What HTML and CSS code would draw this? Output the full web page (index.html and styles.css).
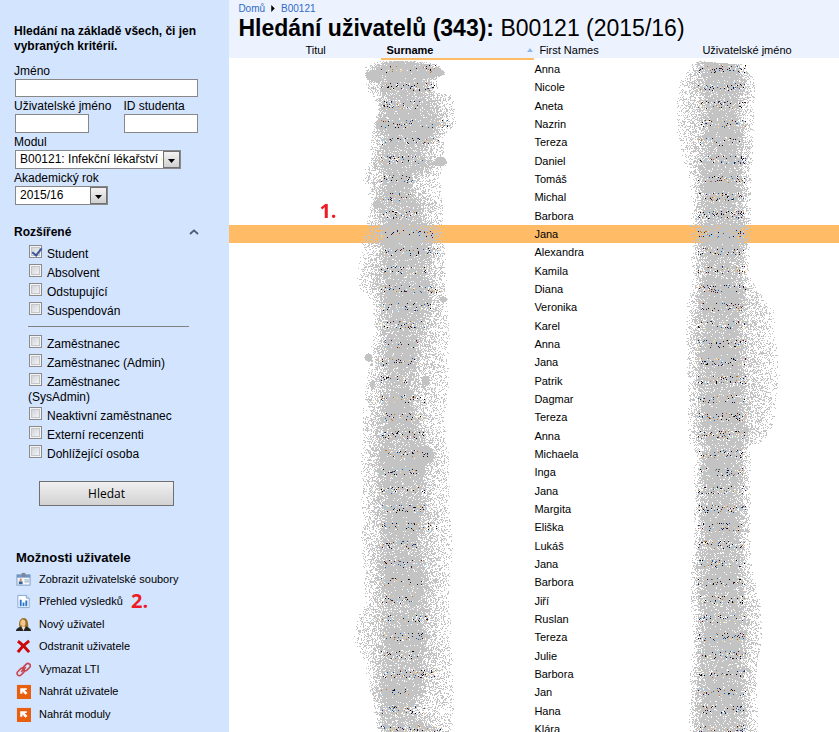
FILE: index.html
```html
<!DOCTYPE html>
<html lang="cs">
<head>
<meta charset="utf-8">
<title>Hledání uživatelů</title>
<link rel="stylesheet" href="styles.css">
</head>
<body>
<div class="app">
  <aside class="sidebar">
    <form class="search">
      <h2 class="intro">Hledání na základě všech, či jen vybraných kritérií.</h2>
      <div class="field"><label for="name">Jméno</label><input class="box" type="text" id="name"></div>
      <div class="pair">
        <div class="field"><label for="user">Uživatelské jméno</label><input class="box short" type="text" id="user"></div>
        <div class="field"><label for="sid">ID studenta</label><input class="box short" type="text" id="sid"></div>
      </div>
      <div class="field"><label for="module">Modul</label>
        <span class="drop module"><select id="module"><option>B00121: Infekční lékařství epidemiologie</option></select><svg class="arrow" viewBox="0 0 17 17"><use href="#drop-arrow"/></svg></span>
      </div>
      <div class="field"><label for="year">Akademický rok</label>
        <span class="drop year"><select id="year"><option>2015/16</option></select><svg class="arrow" viewBox="0 0 17 17"><use href="#drop-arrow"/></svg></span>
      </div>
      <div class="advanced"><h2>Rozšířené</h2><svg class="chevron" viewBox="0 0 10 6"><path d="M1 5 5 1.4 9 5" fill="none" stroke="#4a5c75" stroke-width="1.8"/></svg></div>
      <div class="roles">
        <label><input type="checkbox" checked>Student</label>
        <label><input type="checkbox">Absolvent</label>
        <label><input type="checkbox">Odstupující</label>
        <label><input type="checkbox">Suspendován</label>
        <hr>
        <label><input type="checkbox">Zaměstnanec</label>
        <label><input type="checkbox">Zaměstnanec (Admin)</label>
        <label><input type="checkbox">Zaměstnanec (SysAdmin)</label>
        <label><input type="checkbox">Neaktivní zaměstnanec</label>
        <label><input type="checkbox">Externí recenzenti</label>
        <label><input type="checkbox">Dohlížející osoba</label>
      </div>
      <button class="submit" type="button">Hledat</button>
    </form>
    <nav class="options">
      <h2>Možnosti uživatele</h2>
      <ul>
        <li><a href="#"><svg viewBox="0 0 16 16"><rect x="1" y="3" width="14" height="11" fill="#f3f7fb" stroke="#7d9cc4"/><rect x="1" y="3" width="14" height="3" fill="#6f94c8"/><rect x="6" y="1" width="4" height="4" fill="#7b8793"/><rect x="3" y="10" width="4" height="3" fill="#38618f"/><rect x="4" y="7" width="2" height="3" fill="#c58a68"/><path d="M9 8.5h5M9 10.5h5" stroke="#8ba5c4"/></svg>Zobrazit uživatelské soubory</a></li>
        <li><a href="#"><svg viewBox="0 0 16 16"><path d="M2 1.5h9l3 3v10H2z" fill="#fff" stroke="#84a4d0"/><path d="M11 1.5v3h3" fill="#dbe8f8" stroke="#84a4d0"/><path d="M5 6v7M8 9v4M11 7v6" stroke="#2374cf" stroke-width="2"/></svg>Přehled výsledků</a></li>
        <li><a href="#"><svg viewBox="0 0 16 16"><path d="M4 11C2 7 4 1 8 1c5 0 5 6 5 11z" fill="#9c6b22"/><path d="M5 10C3 6 5 2 8 2l-2 4z" fill="#d9a444"/><ellipse cx="7.700" cy="6.500" rx="2.500" ry="3.500" fill="#f0c893"/><path d="M0 15c0-3 3-4 5-5l3 3 3-3c2 1 5 2 5 5z" fill="#252525"/><path d="m6 10 2 5 2-5z" fill="#efe5d4"/></svg>Nový uživatel</a></li>
        <li><a href="#"><svg viewBox="0 0 16 16"><path d="M2 2.500Q6 5 14 14M14 2Q7 7 2 14" fill="none" stroke="#cc0808" stroke-width="3.200"/></svg>Odstranit uživatele</a></li>
        <li><a href="#"><svg viewBox="0 0 16 16"><g fill="none" stroke="#c9434d" stroke-width="1.700"><rect x="6.800" y="3" width="9" height="5" rx="2.500" transform="rotate(-45 11.300 5.500)"/><rect x=".5" y="8.200" width="9" height="5" rx="2.500" transform="rotate(-45 5 10.700)"/><path d="m5.500 10.500 5-5"/></g></svg>Vymazat LTI</a></li>
        <li><a href="#"><svg viewBox="0 0 16 16"><use href="#upload"/></svg>Nahrát uživatele</a></li>
        <li><a href="#"><svg viewBox="0 0 16 16"><use href="#upload"/></svg>Nahrát moduly</a></li>
      </ul>
      <span class="mark mark-two">2.</span>
    </nav>
  </aside>
  <main class="content">
    <header class="top">
      <nav class="crumbs"><a href="#">Domů</a><svg viewBox="0 0 4 8"><path d="M0 0v8l4-4z"/></svg><a href="#">B00121</a></nav>
      <h1><b>Hledání uživatelů (343):</b> B00121 (2015/16)</h1>
    </header>
    <div class="list">
      <table>
        <colgroup><col class="c-title"><col class="c-surname"><col class="c-first"><col class="c-user"></colgroup>
        <thead><tr><th>Titul</th><th class="sorted"><span class="sort">Surname<svg viewBox="0 0 6 4"><path d="M3 0 6 4H0z" fill="#8dbbe8"/></svg></span></th><th>First Names</th><th>Uživatelské jméno</th></tr></thead>
        <tbody id="rows"></tbody>
      </table>
      <canvas id="spray" width="610" height="690"></canvas>
      <span class="mark mark-one">1.</span>
    </div>
  </main>
</div>
<svg class="defs">
  <defs>
    <linearGradient id="face" x1="0" y1="0" x2="0" y2="1"><stop offset="0" stop-color="#f4f4f4"/><stop offset="1" stop-color="#cfcfcf"/></linearGradient>
    <symbol id="drop-arrow" viewBox="0 0 17 17"><rect x=".5" y=".5" width="16" height="16" fill="url(#face)" stroke="#707070"/><path d="M5 8h7l-3.500 4z"/></symbol>
    <symbol id="upload" viewBox="0 0 16 16"><rect x="1" y="1" width="15" height="15" fill="#e85f10"/><path d="M4.500 4.500h7v2H9.200l3 3-2 2-3.400-3.400v2.400h-2.300z" fill="#fff"/></symbol>
  </defs>
</svg>
<script src="list.js"></script>
</body>
</html>
```
FILE: styles.css
```css
* { box-sizing: border-box; }
body { margin: 0; font: 12px/15px "Liberation Sans", Arial, sans-serif; color: #000; background: #fff; }
h1, h2, ul { margin: 0; padding: 0; }
h2 { font-size: 12px; line-height: 15px; }
.app { display: flex; height: 100vh; overflow: hidden; }
.defs { position: absolute; width: 0; height: 0; }

.sidebar { flex: 0 0 229px; background: #d3e4ff; padding: 24px 31px 0 14px; }
.intro { margin-bottom: 9px; }
.field { display: flex; flex-direction: column; }
.field label { line-height: 16px; white-space: nowrap; }
.box { width: 183px; height: 18px; margin: 0 0 1px 1px; padding: 1px 3px; border: 1px solid #888; background: #fff; font: inherit; }
.short { width: 74px; height: 19px; }
.pair { display: flex; gap: 12px; }
.drop { position: relative; height: 19px; margin: 0 0 1px 1px; }
.drop select { appearance: none; width: 100%; height: 19px; display: block; padding: 0 18px 0 4px; border: 1px solid #888; border-radius: 0; background: #fff; color: #000; font: inherit; }
.module { width: 166px; }
.year { width: 93px; }
.arrow { position: absolute; right: 1px; top: 1px; width: 17px; height: 17px; pointer-events: none; }
.advanced { display: flex; justify-content: space-between; align-items: center; margin: 18px 0 4px; }
.advanced h2 { line-height: 16px; }
.chevron { width: 10px; height: 6px; margin-right: -1px; }
.roles { padding-left: 14px; }
.roles label { display: block; padding: 1px 16px 1px 0; }
.roles input { appearance: none; width: 13px; height: 13px; margin: 0 5px 0 1px; border: 1px solid #8b8b8b; background: linear-gradient(135deg, #c9ccd2, #fafafa); box-shadow: inset 0 0 0 1px #f4f4f4, inset 0 0 0 2px #c3c6cb; position: relative; }
.roles input:checked::after { content: ""; position: absolute; left: 4px; top: 0; width: 4px; height: 8px; border: solid #3b5698; border-width: 0 2px 2px 0; transform: rotate(38deg); }
.roles hr { width: 161px; height: 1px; margin: 6px 0 7px; border: 0; background: #808080; }
.submit { display: block; width: 135px; height: 25px; margin: 18px 0 0 25px; border: 1px solid #707070; background: linear-gradient(#f0f0f0, #d2d2d2); color: #000; font: 12px "Open Sans", sans-serif; }

.options { position: relative; margin-top: 44px; padding-left: 2px; }
.options h2 { font-size: 13px; margin-bottom: 3px; }
.options ul { list-style: none; }
.options li { height: 22px; }
.options li:nth-child(even) { height: 23px; }
.options a { display: flex; align-items: center; gap: 8px; height: 22px; color: #000; text-decoration: none; font-size: 11px; white-space: nowrap; }
.options svg { width: 15px; height: 15px; }
.mark { position: absolute; color: #ed1c24; font: bold 20px/24px "Open Sans", sans-serif; }
.mark-two { left: 117px; top: 39px; }

.content { flex: 1; min-width: 0; overflow: hidden; }
.top { background: #ecf3ff; padding: 2px 9px 0; height: 42px; }
.crumbs { display: flex; align-items: center; gap: 6px; font-size: 10px; line-height: 13px; }
.crumbs a { color: #316ac5; text-decoration: none; }
.crumbs svg { width: 4px; height: 7px; }
h1 { font-size: 23px; line-height: 27px; font-weight: normal; white-space: nowrap; }
.list { position: relative; }
table { width: 100%; border-collapse: separate; border-spacing: 0; table-layout: fixed; font-size: 11px; }
.c-title { width: 152px; }
.c-surname { width: 153px; }
.c-first { width: 163px; }
th, td { padding: 0; text-align: left; white-space: nowrap; }
th { height: 18px; padding-left: 5px; line-height: 16px; font-weight: normal; background: #ecf3ff; border-bottom: 2px solid #fff; vertical-align: top; }
th:first-child { padding-left: 76px; }
th.sorted { font-weight: bold; border-color: #ffbb66; }
.sort { display: flex; justify-content: space-between; align-items: center; }
.sort svg { width: 6px; height: 4px; margin-right: 1px; }
tbody td { height: 18px; line-height: 18px; }
tbody tr:nth-child(3n) td { height: 19px; }
.picked td { background: #ffbb66; }
#spray { position: absolute; left: 0; top: 0; pointer-events: none; }
.mark-one { left: 90px; top: 157px; }
```
FILE: list.js
```js
const names = "Anna Nicole Aneta Nazrin Tereza Daniel Tomáš Michal Barbora Jana Alexandra Kamila Diana Veronika Karel Anna Jana Patrik Dagmar Tereza Anna Michaela Inga Jana Margita Eliška Lukáš Jana Barbora Jiří Ruslan Tereza Julie Barbora Jan Hana Klára".split(" ");
document.getElementById("rows").innerHTML = names.map((n, i) =>
  `<tr${i === 9 ? ' class="picked"' : ""}><td></td><td></td><td>${n}</td><td></td></tr>`).join("");

// Grey spray that hides the surnames and the login numbers.
// Each stop: y, outer left, core left, core right, outer right.
const surname = [[61,380,390,410,420],[64,368,378,432,440],[69,364,370,440,444],[75,364,366,440,445],[80,366,376,430,436],[90,368,380,430,438],[95,372,382,430,450],[105,378,380,438,455],[124,374,376,443,455],[135,370,382,435,445],[155,370,378,422,443],[162,370,374,440,448],[170,365,380,425,442],[180,363,382,412,440],[190,368,380,412,440],[205,371,374,422,443],[220,368,380,425,443],[233,362,378,432,443],[250,362,380,432,445],[270,358,376,430,446],[280,356,380,430,446],[290,362,378,430,444],[300,372,380,432,446],[330,375,382,425,450],[350,371,382,420,448],[390,366,382,415,448],[420,362,378,418,444],[450,362,376,430,448],[480,361,378,425,449],[520,361,380,425,450],[543,362,380,422,453],[570,364,378,425,450],[600,366,380,428,448],[620,357,381,427,450],[640,354,381,427,450],[660,364,380,425,452],[690,370,378,425,453],[710,374,380,410,453],[732,378,380,440,452]];
const login = [[61,697,698,702,705],[64,692,698,738,742],[75,684,700,742,752],[85,679,702,744,755],[115,677,703,740,753],[130,677,705,742,753],[150,681,702,742,752],[160,684,698,742,752],[180,690,698,742,751],[205,693,700,742,750],[230,690,700,745,751],[270,692,700,740,748],[290,692,698,744,757],[300,688,698,745,765],[310,687,698,743,773],[330,686,697,743,775],[375,688,698,745,779],[420,688,698,744,774],[430,688,700,750,770],[442,689,700,748,762],[446,695,702,742,750],[550,694,700,742,750],[570,691,700,742,752],[600,691,700,744,760],[635,693,700,746,762],[670,691,698,744,756],[732,688,698,744,758]];
const lengths = [58,54,40,68,58,45,32,30,36,52,60,52,60,50,52,38,40,26,44,44,44,48,36,46,44,56,36,46,44,32,48,46,38,56,28,44,60];
const inks = ["#000", "#201030", "#4a1530", "#1d5fa8", "#c07828", "#8fd0f4", "#ffdc98"];
const originX = 229, originY = 42;
const ctx = document.getElementById("spray").getContext("2d");
let seed = 7;
const rnd = () => (seed = (seed * 16807) % 2147483647) / 2147483647;
const dot = (x, y, c) => { ctx.fillStyle = c; ctx.fillRect(x - originX, y - originY, 1, 1); };

function spray(stops) {
  for (let s = 0; s < stops.length - 1; s++) {
    const a = stops[s], b = stops[s + 1];
    for (let y = a[0]; y < b[0]; y++) {
      const t = (y - a[0]) / (b[0] - a[0]);
      const [, l, cl, cr, r] = a.map((v, i) => v + (b[i] - v) * t);
      const core = 0.93 + 0.05 * Math.sin(y / 9);
      for (let x = Math.floor(l); x <= r; x++) {
        let p = core;
        if (x < cl) p = 0.15 + 0.45 * (x - l) / (cl - l);
        else if (x > cr) p = 0.15 + 0.4 * (r - x) / (r - cr);
        else p -= 0.25 * Math.max(0, 1 - Math.min(x - cl, cr - x) / 8);
        if (rnd() < p) dot(x, y, "#c3c3c3");
      }
    }
  }
}
function blob(cx, cy, rx, ry) {
  for (let y = -ry; y <= ry; y++)
    for (let x = -rx; x <= rx; x++)
      if (x * x / rx / rx + y * y / ry / ry <= 1) dot(cx + x, cy + y, "#c3c3c3");
}
function specks(x0, width, y0, share) {
  for (let y = y0; y < y0 + 8; y++)
    for (let x = x0; x < x0 + width; x++)
      if (rnd() < share) dot(x, y, inks[Math.floor(rnd() * inks.length)]);
}
spray(surname);
spray(login);
[[373,75,8,5],[435,72,9,4],[379,124,4,5],[440,161,6,5],[376,204,4,4],[368,357,4,4],[372,384,3,4],[425,380,4,5],[443,299,4,3],[425,455,9,8]].forEach(b => blob(...b));
names.forEach((_, i) => {
  const y = 65 + i * 18 + Math.floor(i / 3);
  specks(381, lengths[i], y, 0.1);
  specks(698, 48, y, 0.11);
});
```
